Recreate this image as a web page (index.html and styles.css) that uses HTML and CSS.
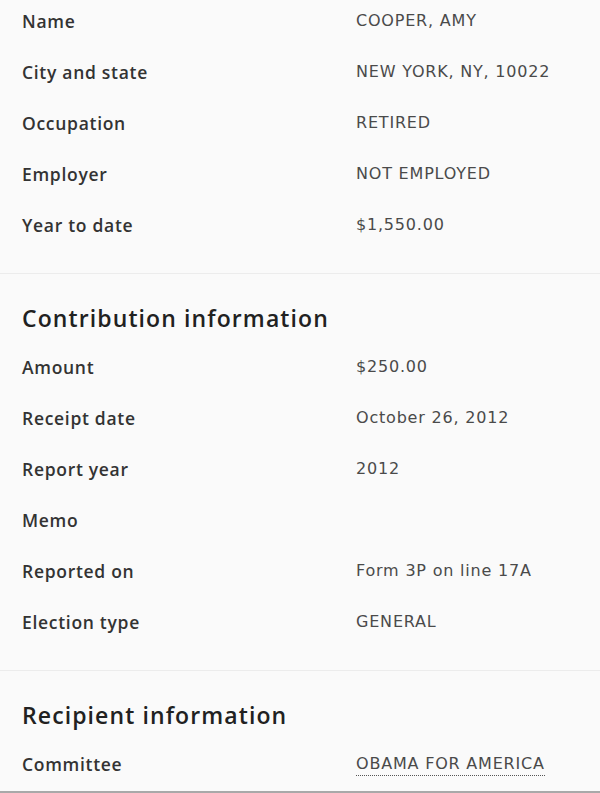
FILE: index.html
```html
<!DOCTYPE html>
<html>
<head>
<meta charset="utf-8">
<link rel="stylesheet" href="styles.css">
</head>
<body>
<div class="page">
  <section class="section first">
    <dl class="rows">
      <div class="row"><dt>Name</dt><dd>COOPER, AMY</dd></div>
      <div class="row"><dt>City and state</dt><dd>NEW YORK, NY, 10022</dd></div>
      <div class="row"><dt>Occupation</dt><dd>RETIRED</dd></div>
      <div class="row"><dt>Employer</dt><dd>NOT EMPLOYED</dd></div>
      <div class="row"><dt>Year to date</dt><dd>$1,550.00</dd></div>
    </dl>
  </section>
  <section class="section">
    <h2 class="heading">Contribution information</h2>
    <dl class="rows">
      <div class="row"><dt>Amount</dt><dd>$250.00</dd></div>
      <div class="row"><dt>Receipt date</dt><dd>October 26, 2012</dd></div>
      <div class="row"><dt>Report year</dt><dd>2012</dd></div>
      <div class="row"><dt>Memo</dt><dd></dd></div>
      <div class="row"><dt>Reported on</dt><dd>Form 3P on line 17A</dd></div>
      <div class="row"><dt>Election type</dt><dd>GENERAL</dd></div>
    </dl>
  </section>
  <section class="section last">
    <h2 class="heading">Recipient information</h2>
    <dl class="rows">
      <div class="row"><dt>Committee</dt><dd><a class="link" href="#">OBAMA FOR AMERICA</a></dd></div>
    </dl>
  </section>
</div>
</body>
</html>
```

FILE: styles.css
```css
html, body {
  margin: 0;
  padding: 0;
  background: #fafafa;
}
.page {
  width: 600px;
  height: 793px;
  box-sizing: border-box;
  border-bottom: 2px solid #a9a9a9;
  overflow: hidden;
}
.section {
  padding: 29px 0 36px 22px;
  border-bottom: 1px solid #ececec;
}
.section.first {
  padding-top: 9px;
}
.section.last {
  border-bottom: none;
  padding-bottom: 0;
}
.heading {
  margin: 0 0 22px 0;
  font-family: "Open Sans", sans-serif;
  font-weight: 600;
  font-size: 23px;
  letter-spacing: 1.1px;
  line-height: 30px;
  color: #212121;
}
.rows {
  margin: 0;
  display: flex;
  flex-direction: column;
  gap: 27px;
}
.row {
  display: grid;
  grid-template-columns: 334px 1fr;
  line-height: 24px;
  height: 24px;
}
dt {
  font-family: "Open Sans", sans-serif;
  font-weight: 600;
  font-size: 17.5px;
  letter-spacing: 0.7px;
  color: #333;
}
dd {
  margin: 0;
  font-family: "DejaVu Sans", sans-serif;
  font-size: 16px;
  letter-spacing: 0.8px;
  color: #4a4a4a;
}
.link {
  color: #4a4a4a;
  text-decoration: none;
  border-bottom: 1px dotted #555;
  padding-bottom: 2px;
}
```
